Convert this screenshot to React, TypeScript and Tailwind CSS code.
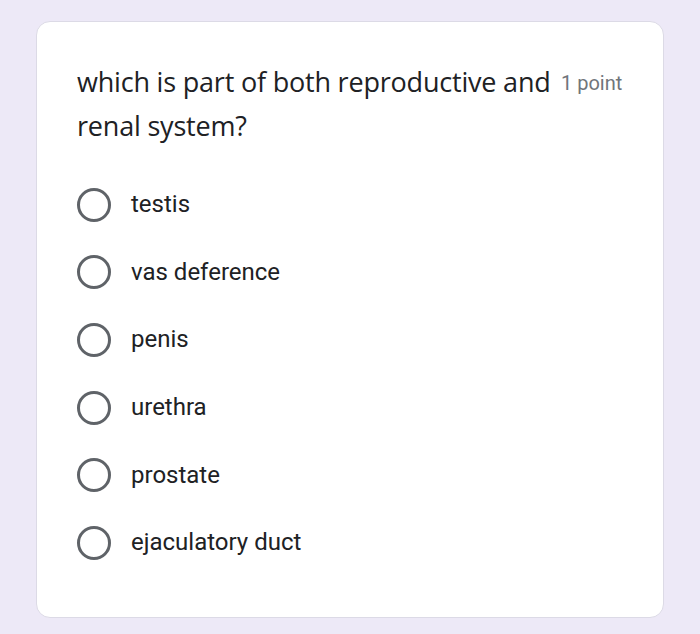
import React from "react";

const options = ["testis", "vas deference", "penis", "urethra", "prostate", "ejaculatory duct"];

export default function App() {
  return (
    <div
      className="w-[700px] h-[634px] bg-[#ede9f7] pt-[21px] pl-[36px]"
      style={{ fontFamily: "Roboto, 'Liberation Sans', sans-serif" }}
    >
      <div className="w-[628px] h-[597px] bg-white rounded-[14px] border border-[#dcdae6] pl-[40px] pt-[38px] pr-[24px]">
        <div className="flex items-start">
          <div
            className="w-[484px] text-[27px] leading-[44px] text-[#202124] tracking-[-0.2px]"
            style={{ fontFamily: "'Open Sans', Roboto, sans-serif" }}
          >
            which is part of both reproductive and renal system?
          </div>
          <div className="pt-[13px] text-[20px] leading-[20px] text-[#70757a]">1 point</div>
        </div>
        <div className="mt-[23px] flex flex-col">
          {options.map((o) => (
            <div key={o} className="h-[67.6px] flex items-center">
              <div className="w-[34px] h-[34px] rounded-full border-[3px] border-[#5f6368]" />
              <div className="ml-[20px] text-[24px] text-[#202124] leading-none pb-[1px]">{o}</div>
            </div>
          ))}
        </div>
      </div>
    </div>
  );
}
